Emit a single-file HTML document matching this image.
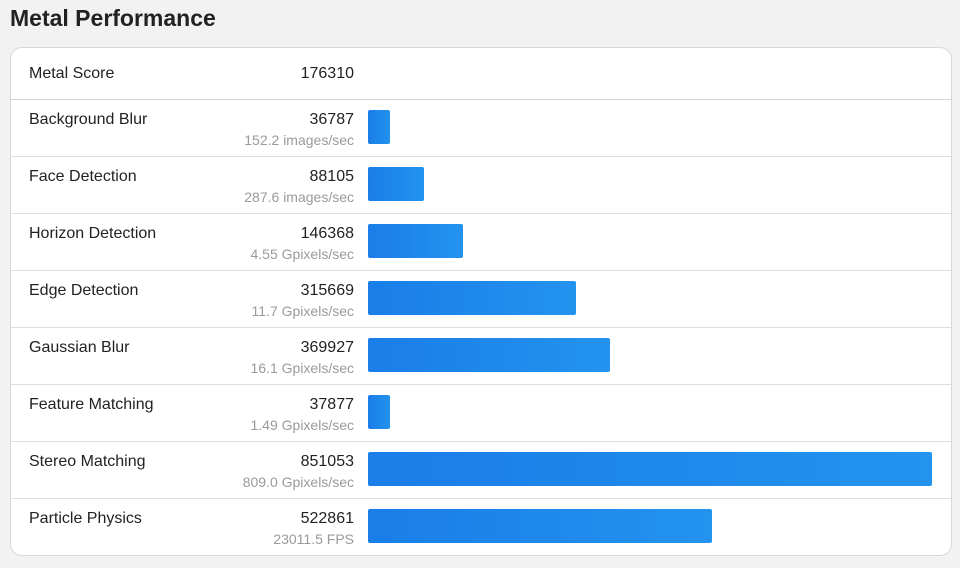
<!DOCTYPE html>
<html><head><meta charset="utf-8"><style>
body{margin:0;width:960px;height:568px;background:#f2f2f2;font-family:"Liberation Sans",sans-serif;position:relative;overflow:hidden}
h1{position:absolute;left:10px;top:5px;margin:0;font-size:23px;font-weight:bold;color:#222}
.card{position:absolute;left:10px;top:47px;width:942px;height:509px;background:#fff;border:1px solid #d8d8d8;border-radius:12px;box-sizing:border-box;overflow:hidden}
.hd{position:absolute;left:0;top:0;width:100%;height:51px;border-bottom:1px solid #d4d4d4}
.row{position:absolute;left:0;width:100%;height:57px;border-bottom:1px solid #dedede;box-sizing:border-box}
.n{position:absolute;left:18px;top:11px;font-size:16px;color:#222}
.v{position:absolute;right:597px;top:11px;font-size:16px;color:#222;text-align:right}
.s{position:absolute;right:597px;top:32px;font-size:14px;color:#9a9a9a;white-space:nowrap}
.b{position:absolute;left:357px;top:10px;height:34px;border-radius:2px;background:linear-gradient(90deg,#1a7de8,#2393ee)}
</style></head><body>
<h1>Metal Performance</h1>
<div class="card">
<div class="hd"><div class="n" style="top:17px">Metal Score</div><div class="v" style="top:17px">176310</div></div>
<div class="row" style="top:52px"><div class="n">Background Blur</div><div class="v">36787</div><div class="s">152.2 images/sec</div><div class="b" style="width:22px"></div></div>
<div class="row" style="top:109px"><div class="n">Face Detection</div><div class="v">88105</div><div class="s">287.6 images/sec</div><div class="b" style="width:56px"></div></div>
<div class="row" style="top:166px"><div class="n">Horizon Detection</div><div class="v">146368</div><div class="s">4.55 Gpixels/sec</div><div class="b" style="width:95px"></div></div>
<div class="row" style="top:223px"><div class="n">Edge Detection</div><div class="v">315669</div><div class="s">11.7 Gpixels/sec</div><div class="b" style="width:208px"></div></div>
<div class="row" style="top:280px"><div class="n">Gaussian Blur</div><div class="v">369927</div><div class="s">16.1 Gpixels/sec</div><div class="b" style="width:242px"></div></div>
<div class="row" style="top:337px"><div class="n">Feature Matching</div><div class="v">37877</div><div class="s">1.49 Gpixels/sec</div><div class="b" style="width:22px"></div></div>
<div class="row" style="top:394px"><div class="n">Stereo Matching</div><div class="v">851053</div><div class="s">809.0 Gpixels/sec</div><div class="b" style="width:564px"></div></div>
<div class="row" style="top:451px;border-bottom:none"><div class="n">Particle Physics</div><div class="v">522861</div><div class="s">23011.5 FPS</div><div class="b" style="width:344px"></div></div>
</div>
</body></html>
